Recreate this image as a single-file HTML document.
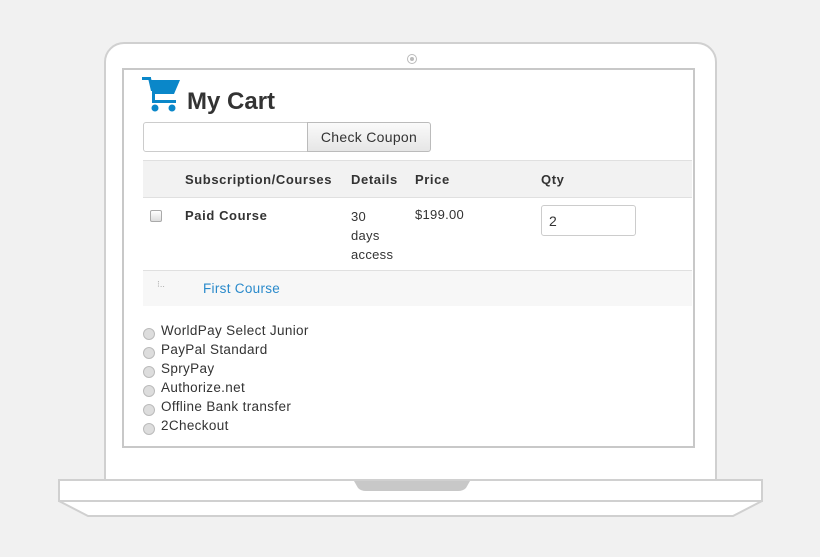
<!DOCTYPE html>
<html><head><style>
body{margin:0;width:820px;height:557px;background:#f1f1f1;position:relative;overflow:hidden;font-family:"Liberation Sans",Arial,sans-serif;color:#333}
.a{position:absolute}
.lid{left:104px;top:42px;width:609px;height:460px;background:#fff;border:2px solid #d0d0d0;border-radius:20px 20px 0 0}
.scr{left:122px;top:68px;width:569px;height:376px;border:2px solid #c8c8c8;background:#fff}
.t{font-size:13px;letter-spacing:0.3px}
.r{width:12px;height:12px;border-radius:50%;background:#ddd;border:1px solid #bbb;box-sizing:border-box}
.pl{left:143px;top:321px;line-height:19px;font-size:13.5px;letter-spacing:0.35px}
</style></head><body>
<div class="a lid"></div>
<div class="a" style="left:407px;top:54px;width:8px;height:8px;border:1px solid #bbb;border-radius:50%"></div>
<div class="a" style="left:410px;top:57px;width:4px;height:4px;background:#bbb;border-radius:50%"></div>
<div class="a scr"></div>
<svg class="a" style="left:142px;top:76px" width="40" height="37" viewBox="0 0 40 37"><path d="M0 1h9v3H0z" fill="#0a87c9"/><path d="M6 2h3l3 13h-3z" fill="#0a87c9"/><path d="M8 4h30l-6 14H12z" fill="#0a87c9"/><path d="M10 15h3v9h21v3H10z" fill="#0a87c9"/><circle cx="13" cy="32" r="3.5" fill="#0a87c9"/><circle cx="30" cy="32" r="3.5" fill="#0a87c9"/></svg>
<div class="a" style="left:187px;top:88px;font-size:24px;font-weight:bold;color:#333">My Cart</div>
<div class="a" style="left:143px;top:122px;width:164px;height:28px;border:1px solid #ccc;border-radius:3px 0 0 3px;background:#fff"></div>
<div class="a t" style="left:307px;top:122px;width:122px;height:28px;border:1px solid #bbb;border-radius:0 3px 3px 0;background:linear-gradient(#fafafa,#e6e6e6);line-height:28px;text-align:center;font-size:14px">Check Coupon</div>
<div class="a" style="left:143px;top:160px;width:549px;height:36px;background:#f2f2f2;border-top:1px solid #e0e0e0;border-bottom:1px solid #e0e0e0"></div>
<div class="a t" style="left:185px;top:172px;font-weight:bold;letter-spacing:0.6px">Subscription/Courses</div>
<div class="a t" style="left:351px;top:172px;font-weight:bold;letter-spacing:0.6px">Details</div>
<div class="a t" style="left:415px;top:172px;font-weight:bold;letter-spacing:0.6px">Price</div>
<div class="a t" style="left:541px;top:172px;font-weight:bold;letter-spacing:0.6px">Qty</div>
<div class="a" style="left:150px;top:210px;width:12px;height:12px;border:1px solid #aaa;border-radius:2px;background:linear-gradient(#fff,#ddd);box-sizing:border-box"></div>
<div class="a t" style="left:185px;top:208px;font-weight:bold;letter-spacing:0.6px">Paid Course</div>
<div class="a t" style="left:351px;top:207px;line-height:19px">30<br>days<br>access</div>
<div class="a t" style="left:415px;top:207px">$199.00</div>
<div class="a t" style="left:541px;top:205px;width:95px;height:31px;border:1px solid #ccc;border-radius:3px;line-height:31px;box-sizing:border-box;padding-left:7px;font-size:14px">2</div>
<div class="a" style="left:143px;top:270px;width:549px;height:35px;background:#f7f7f7;border-top:1px solid #e0e0e0"></div>
<div class="a" style="left:157px;top:279px;font-size:9px;color:#aaa">⁝..</div>
<div class="a t" style="left:203px;top:281px;color:#2a8acb;font-size:13.5px">First Course</div>
<div class="a pl">
<div style="display:flex;align-items:flex-end;gap:6px"><span class="r"></span>WorldPay Select Junior</div>
<div style="display:flex;align-items:flex-end;gap:6px"><span class="r"></span>PayPal Standard</div>
<div style="display:flex;align-items:flex-end;gap:6px"><span class="r"></span>SpryPay</div>
<div style="display:flex;align-items:flex-end;gap:6px"><span class="r"></span>Authorize.net</div>
<div style="display:flex;align-items:flex-end;gap:6px"><span class="r"></span>Offline Bank transfer</div>
<div style="display:flex;align-items:flex-end;gap:6px"><span class="r"></span>2Checkout</div>
</div>
<svg class="a" style="left:0;top:0" width="820" height="557"><path d="M59 501 L88 516 L733 516 L762 501Z" fill="#fff" stroke="#d0d0d0" stroke-width="2"/><rect x="59" y="480" width="703" height="21" fill="#fff" stroke="#d0d0d0" stroke-width="2"/><path d="M354 481 H470 L466 488 Q463 491 458 491 H366 Q361 491 358 488Z" fill="#c8c8c8"/></svg>
</body></html>
